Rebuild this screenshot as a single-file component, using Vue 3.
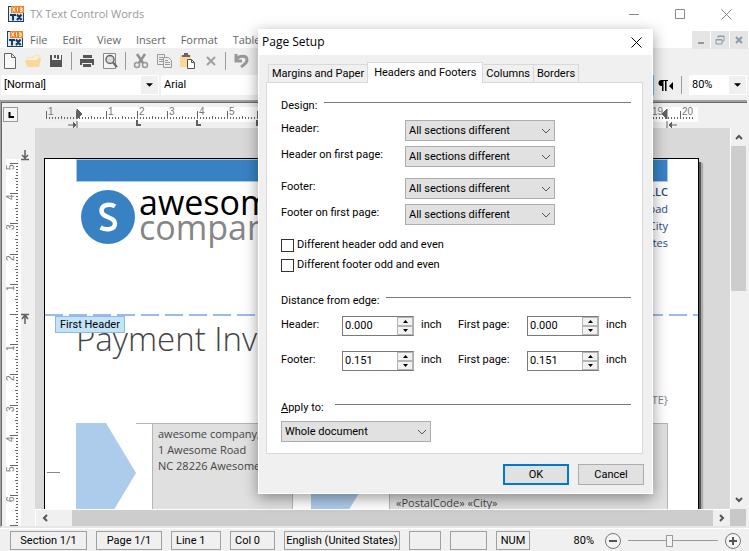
<script setup>
import { reactive, ref } from 'vue'

const UNIT = 30.2
const menus = ['File', 'Edit', 'View', 'Insert', 'Format', 'Table']

function buildTicks(from, to) {
  const list = []
  for (let i = from * 10; i <= to * 10; i++) {
    const whole = i % 10 === 0
    list.push({
      pos: Math.round((i - from * 10) * UNIT / 10),
      size: whole ? 8 : i % 5 === 0 ? 3 : 2,
      label: whole && i !== 0 ? String(Math.abs(i / 10)) : ''
    })
  }
  return list
}
const hTicks = buildTicks(-1, 20.4)
const vTicks = buildTicks(-5, 7)
const tabStops = [2, 4, 6].map(n => Math.round((n + 1) * UNIT))

const tabs = ['Margins and Paper', 'Headers and Footers', 'Columns', 'Borders']
const activeTab = ref('Headers and Footers')

const sectionChoices = ['All sections different', 'Same as previous']
const design = reactive([
  { id: 'header', label: 'Header:', value: sectionChoices[0] },
  { id: 'header-first', label: 'Header on first page:', value: sectionChoices[0] },
  { id: 'footer', label: 'Footer:', value: sectionChoices[0], spaced: true },
  { id: 'footer-first', label: 'Footer on first page:', value: sectionChoices[0] }
])
const oddEven = reactive([
  { id: 'odd-header', label: 'Different header odd and even', on: false },
  { id: 'odd-footer', label: 'Different footer odd and even', on: false }
])
const distances = reactive([
  { id: 'dist-header', label: 'Header:', value: '0.000' },
  { id: 'dist-header-first', label: 'First page:', value: '0.000' },
  { id: 'dist-footer', label: 'Footer:', value: '0.151' },
  { id: 'dist-footer-first', label: 'First page:', value: '0.151' }
])
function step(field, by) {
  field.value = Math.max(0, Number(field.value) + by).toFixed(3)
}
const applyTo = ref('Whole document')
const style = ref('[Normal]')
const font = ref('Arial')
const zoomText = ref('80%')
const zoomValue = ref(46)
</script>

<template>
  <div class="app">
    <header class="titlebar">
      <svg class="logo" viewBox="0 0 16 16" aria-hidden="true">
        <rect x="0.5" y="0.5" width="15" height="15" fill="#dfe9f2" stroke="#17406b" />
        <rect x="3" y="0" width="13" height="7" fill="#f58220" />
        <path d="M4.5 1.5l2.5 4M7 1.5l-2.5 4M9.5 1.5v4M12 2h2v3.500h-2M12 3.700h2" stroke="#fff" fill="none" />
        <path d="M2 9h6M5 9v5.500M9 8.500l4.500 5.500M13.500 8.500L9 14" stroke="#123a63" stroke-width="2" fill="none" />
      </svg>
      <span class="app-name">TX Text Control Words</span>
      <div class="win-buttons">
        <button type="button" aria-label="Minimize"><svg viewBox="0 0 11 11"><path d="M0 5.500h10" /></svg></button>
        <button type="button" aria-label="Maximize"><svg viewBox="0 0 11 11"><path d="M.5.5h9v9h-9z" /></svg></button>
        <button type="button" aria-label="Close"><svg viewBox="0 0 11 11"><path d="M.5.5l10 10M10.500.5l-10 10" /></svg></button>
      </div>
    </header>

    <nav class="menubar">
      <svg class="logo" viewBox="0 0 16 16" aria-hidden="true">
        <rect x="0.5" y="0.5" width="15" height="15" fill="#dfe9f2" stroke="#17406b" />
        <rect x="3" y="0" width="13" height="7" fill="#f58220" />
        <path d="M4.5 1.5l2.5 4M7 1.5l-2.5 4M9.5 1.5v4M12 2h2v3.500h-2M12 3.700h2" stroke="#fff" fill="none" />
        <path d="M2 9h6M5 9v5.500M9 8.500l4.500 5.500M13.500 8.500L9 14" stroke="#123a63" stroke-width="2" fill="none" />
      </svg>
      <div class="menus"><button v-for="m in menus" :key="m" type="button" class="menu">{{ m }}</button></div>
      <div class="mdi-buttons">
        <button type="button" aria-label="Minimize document"><svg viewBox="0 0 10 10"><path d="M2 8h6" stroke-width="2" /></svg></button>
        <button type="button" aria-label="Restore document"><svg viewBox="0 0 10 10"><path d="M3 3V1h6v5H7M3 1.500h6M1 4.500h6V9H1zM1 5h6" stroke-width="1" /></svg></button>
        <button type="button" aria-label="Close document"><svg viewBox="0 0 10 10"><path d="M2 2l6 6M8 2l-6 6" stroke-width="2" /></svg></button>
      </div>
    </nav>

    <div class="toolbar">
      <button type="button" aria-label="New"><svg viewBox="0 0 16 16"><path d="M2.500.5h7l4 4v11h-11zM9.500.5v4h4" fill="#f8f8f8" stroke="#666" /></svg></button>
      <button type="button" aria-label="Open"><svg viewBox="0 0 16 16"><path d="M2.500 8V4.500h5l2-2h5v5" fill="none" stroke="#fbe3b8" stroke-width="1.500" /><path d="M0 7h12l1-2h3l-2 9H2z" fill="#fbd897" /></svg></button>
      <button type="button" aria-label="Save"><svg viewBox="0 0 16 16"><path d="M2 2h2v5h9V2h1v12H2z" fill="#555" /><path d="M6 2h2v3H6zM9 2h2v4H9z" fill="#555" /></svg></button>
      <span class="sep"></span>
      <button type="button" aria-label="Print"><svg viewBox="0 0 16 16"><path d="M4 2h9v3H4z" fill="#555" /><path d="M1 6h14v6h-2v-2H3v2H1z" fill="#555" /><path d="M4 11h8v3H4z" fill="#555" /></svg></button>
      <button type="button" aria-label="Print preview"><svg viewBox="0 0 16 16"><path d="M1.500.5h12v15h-12z" fill="#f4f4f4" stroke="#888" /><circle cx="8" cy="6.500" r="4" fill="#ddd" stroke="#666" stroke-width="1.500" /><path d="M11 9.500l4 4.500" stroke="#666" stroke-width="2" /></svg></button>
      <span class="sep"></span>
      <button type="button" aria-label="Cut"><svg viewBox="0 0 16 16"><path d="M4 1l6 9M12 1L6 10" stroke="#909090" stroke-width="2.500" /><circle cx="4" cy="12" r="2.500" fill="none" stroke="#999" stroke-width="1.500" /><circle cx="12" cy="12" r="2.500" fill="none" stroke="#999" stroke-width="1.500" /></svg></button>
      <button type="button" aria-label="Copy"><svg viewBox="0 0 16 16"><path d="M1.500 1.500h7v10h-7zM3 4.500h4M3 6.500h4M3 8.500h4" fill="#eee" stroke="#999" /><path d="M7.500 4.500h5l3 3v7h-8zM9 7.500h3M9 9.500h5M9 11.500h5" fill="#eee" stroke="#999" /></svg></button>
      <button type="button" aria-label="Paste"><svg viewBox="0 0 16 16"><path d="M1 2h11v12H1z" fill="#fbd897" /><path d="M3 4V2h2V0h4v2h2v2z" fill="#666" /><path d="M8.500 6.500h4l3 3v6h-7z" fill="#fff" stroke="#555" /><path d="M12.500 6.500v3h3" fill="none" stroke="#555" /></svg></button>
      <button type="button" aria-label="Delete"><svg viewBox="0 0 16 16"><path d="M5 4l8 8M13 4l-8 8" stroke="#a0a0a0" stroke-width="2" /></svg></button>
      <span class="sep"></span>
      <button type="button" aria-label="Undo"><svg viewBox="0 0 16 16"><path d="M3 1v7h6" fill="none" stroke="#999" stroke-width="3" /><path d="M3 7c3-5 11-5 11 0 0 3-3 5-6 7" fill="none" stroke="#999" stroke-width="3" /></svg></button>
    </div>

    <div class="formatbar">
      <div class="combo style-combo"><input v-model="style" aria-label="Style"><button type="button" aria-label="Show styles"><svg viewBox="0 0 8 4"><path d="M0 0h8L4 4z" /></svg></button></div>
      <div class="combo font-combo"><input v-model="font" aria-label="Font"><button type="button" aria-label="Show fonts"><svg viewBox="0 0 8 4"><path d="M0 0h8L4 4z" /></svg></button></div>
      <button type="button" class="toggle" aria-label="Left to right" aria-pressed="true"></button>
      <button type="button" class="rtl" aria-label="Right to left"><svg viewBox="0 0 15 13"><path d="M9 1H3.500a3 3 0 0 0 0 6H4v5h1.500V2H7v10h1.500V2H10V1zM15 3v8l-4-4z" /></svg></button>
      <span class="sep"></span>
      <div class="combo zoom-combo"><input v-model="zoomText" aria-label="Zoom"><button type="button" aria-label="Show zoom levels"><svg viewBox="0 0 8 4"><path d="M0 0h8L4 4z" /></svg></button></div>
    </div>

    <main class="editor">
      <div class="corner"><button type="button" aria-label="Tab type"><svg viewBox="0 0 6 6"><path d="M1.500 0v5H6" fill="none" stroke="#000" stroke-width="2" /></svg></button></div>
      <div class="ruler-top">
        <svg class="h-ruler" width="652" height="25">
          <rect x="0" y="4" width="652" height="15" fill="#fff" />
          <rect x="0" y="4" width="31" height="15" fill="#eee" />
          <g v-for="t in hTicks" :key="t.pos">
            <rect :x="t.pos" :y="16 - t.size" width="1" :height="t.size" fill="#666" />
            <text v-if="t.label" :x="t.pos + 2" y="12">{{ t.label }}</text>
          </g>
          <path d="M31 6l5 5-5 5zM22 22h8M27 19l3 3-3 3M31 18v7" fill="#606060" stroke="#606060" />
          <path v-for="s in tabStops" :key="s" :d="`M${s} 17v5h4`" fill="none" stroke="#606060" stroke-width="2" />
          <path d="M621 6l-5 5 5 5zM623 22h8M626 19l-3 3 3 3M621 18v7" fill="#606060" stroke="#606060" />
        </svg>
      </div>
      <div class="ruler-left">
        <svg class="v-ruler" width="23" height="400">
          <rect x="0" y="0" width="15" height="400" fill="#fff" />
          <g v-for="t in vTicks" :key="t.pos">
            <rect :x="12 - t.size" :y="t.pos + 4" :width="t.size" height="1" fill="#666" />
            <text v-if="t.label" :transform="`translate(8 ${t.pos + 11}) rotate(-90)`">{{ t.label }}</text>
          </g>
        </svg>
        <svg class="v-marks" width="8" height="180"><path d="M4 0v9M1 5l3 3 3-3M0 9.500h8M0 164.500h8M4 165v9M1 169l3-4 3 4" fill="none" stroke="#606060" stroke-width="1.500" /></svg>
      </div>

      <div class="workspace">
        <div class="viewport">
          <article class="page">
            <div class="band"></div>
            <div class="letterhead">
              <svg class="brand-mark" viewBox="0 0 54 54" aria-hidden="true"><circle cx="27" cy="27" r="27" fill="#3882c4" /><path d="M34 16.500C30 13.500 20.500 14 20.500 21c0 7 13.500 5.500 13.500 12.500 0 6.500-9 7-14.500 4" fill="none" stroke="#fff" stroke-width="4.500" /></svg>
              <p class="brand"><b>awesome</b><span>company</span></p>
              <address><strong>awesome company, LLC</strong><br>1 Awesome Road<br>Awesome City<br>United States</address>
            </div>
            <div class="divider"><span class="tag">First Header</span></div>
            <h1>Payment Invoice</h1>
            <p class="date">{DATE}</p>
            <section class="parties">
              <span class="fold"></span>
              <svg viewBox="0 0 60 100"><path d="M0 0h30l30 50-30 50H0z" fill="#adcbea" /></svg>
              <div class="party"><p>awesome company, LLC<br>1 Awesome Road<br>NC 28226 Awesome City</p></div>
              <svg class="second" viewBox="0 0 60 100"><path d="M0 0h30l30 50-30 50H0z" fill="#adcbea" /></svg>
              <div class="party client"><p>«PostalCode» «City»</p></div>
            </section>
          </article>
        </div>
        <div class="vscroll">
          <button type="button" aria-label="Scroll up"><svg viewBox="0 0 8 6"><path d="M1 5l3-3 3 3" /></svg></button>
          <div class="track"><div class="thumb"></div></div>
          <button type="button" aria-label="Scroll down"><svg viewBox="0 0 8 6"><path d="M1 1l3 3 3-3" /></svg></button>
        </div>
        <div class="hscroll">
          <button type="button" aria-label="Scroll left"><svg viewBox="0 0 6 8"><path d="M5 1L2 4l3 3" /></svg></button>
          <div class="thumb"></div>
          <button type="button" aria-label="Scroll right"><svg viewBox="0 0 6 8"><path d="M1 1l3 3-3 3" /></svg></button>
        </div>
        <div class="grip"></div>
      </div>
    </main>

    <footer class="statusbar">
      <span class="cell section">Section 1/1</span>
      <span class="cell page-no">Page 1/1</span>
      <span class="cell line">Line 1</span>
      <span class="cell col">Col 0</span>
      <span class="cell lang">English (United States)</span>
      <span class="cell empty"></span>
      <span class="cell wide"></span>
      <span class="cell num">NUM</span>
      <div class="zoomer">
        <label for="zoom-range">80%</label>
        <button type="button" aria-label="Zoom out"><svg viewBox="0 0 16 16"><circle cx="8" cy="8" r="7.500" /><path d="M4 8h8" /></svg></button>
        <input id="zoom-range" v-model="zoomValue" type="range" min="0" max="100">
        <button type="button" aria-label="Zoom in"><svg viewBox="0 0 16 16"><circle cx="8" cy="8" r="7.500" /><path d="M4 8h8M8 4v8" /></svg></button>
      </div>
    </footer>

    <section class="dialog" role="dialog" aria-labelledby="dialog-title">
      <header>
        <h2 id="dialog-title">Page Setup</h2>
        <button type="button" aria-label="Close dialog"><svg viewBox="0 0 11 11"><path d="M.5.5l10 10M10.500.5l-10 10" /></svg></button>
      </header>
      <div class="tabs" role="tablist">
        <button v-for="t in tabs" :key="t" type="button" role="tab" :aria-selected="t === activeTab" :class="{ active: t === activeTab }" @click="activeTab = t">{{ t }}</button>
      </div>
      <form class="panel" @submit.prevent>
        <h3>Design:</h3>
        <div v-for="d in design" :key="d.id" class="row" :class="{ spaced: d.spaced }">
          <label :for="d.id">{{ d.label }}</label>
          <span class="select">
            <select :id="d.id" v-model="d.value"><option v-for="c in sectionChoices" :key="c">{{ c }}</option></select>
            <svg viewBox="0 0 10 6"><path d="M1 1l4 4 4-4" /></svg>
          </span>
        </div>
        <div class="checks">
          <label v-for="o in oddEven" :key="o.id" :for="o.id"><input :id="o.id" v-model="o.on" type="checkbox">{{ o.label }}</label>
        </div>
        <h3>Distance from edge:</h3>
        <div class="distances">
          <div v-for="d in distances" :key="d.id" class="distance">
            <label :for="d.id">{{ d.label }}</label>
            <span class="spin">
              <input :id="d.id" v-model="d.value" type="text">
              <span class="arrows">
                <button type="button" aria-label="Increase" @click="step(d, 0.1)"><svg viewBox="0 0 5 3"><path d="M0 3h5L2.500 0z" /></svg></button>
                <button type="button" aria-label="Decrease" @click="step(d, -0.1)"><svg viewBox="0 0 5 3"><path d="M0 0h5L2.500 3z" /></svg></button>
              </span>
            </span>
            <span class="unit">inch</span>
          </div>
        </div>
        <h3 class="apply"><label for="apply"><u>A</u>pply to:</label></h3>
        <span class="select">
          <select id="apply" v-model="applyTo"><option>Whole document</option><option>Selected sections</option></select>
          <svg viewBox="0 0 10 6"><path d="M1 1l4 4 4-4" /></svg>
        </span>
      </form>
      <footer>
        <button type="button" class="default">OK</button>
        <button type="button">Cancel</button>
      </footer>
    </section>
  </div>
</template>

<style>
body { margin: 0; background: #f0f0f0; }
</style>

<style scoped>
.app { position: relative; display: flex; flex-direction: column; height: 100vh; overflow: hidden; background: #f0f0f0; color: #000; font: 11px/16px Roboto, "Liberation Sans", sans-serif; }
.app *, .app *::before, .app *::after { box-sizing: border-box; }
button, input, select { font: inherit; color: inherit; margin: 0; padding: 0; border: 0; border-radius: 0; background: none; outline: 0; }
button { display: flex; align-items: center; justify-content: center; }
svg { display: block; flex: none; }
h1, h2, h3, p { margin: 0; font-weight: normal; }

.titlebar, .menubar { display: flex; align-items: center; background: #fff; font: 11px/16px "Open Sans", "Noto Sans", sans-serif; flex: none; }
.titlebar { height: 28px; padding-left: 8px; color: #999; }
.menubar { height: 20px; padding-left: 7px; color: #666; }
.logo { width: 16px; height: 16px; }
.app-name { padding-left: 6px; }
.win-buttons { display: flex; margin-left: auto; }
.win-buttons button { width: 46px; height: 28px; }
.win-buttons svg { width: 11px; height: 11px; fill: none; stroke: #888; }
.menus { display: flex; gap: 1px; margin-top: 4px; }
.menu { height: 16px; padding: 0 7px; }
.menubar .logo { margin-top: 2px; }
.mdi-buttons { display: flex; gap: 1px; margin: 3px 1px 0 auto; align-self: flex-start; }
.mdi-buttons button { width: 18px; height: 18px; background: #e5e5e5; }
.mdi-buttons svg { width: 10px; height: 10px; fill: none; stroke: #8c9cab; }

.toolbar { display: flex; align-items: center; gap: 7px; height: 26px; padding-left: 2px; flex: none; }
.toolbar svg { width: 16px; height: 16px; }
.sep { width: 1px; height: 18px; background: #999; }

.formatbar { display: flex; align-items: center; height: 26px; padding: 0 2px 4px 1px; flex: none; }
.combo { display: flex; height: 20px; background: #fff; }
.combo input { flex: 1; min-width: 0; padding-left: 3px; }
.combo button { width: 17px; margin: 1px; background: #f0f0f0; }
.combo svg { width: 7px; height: 4px; }
.style-combo { width: 158px; margin-right: 2px; }
.font-combo { width: 300px; }
.toggle { width: 22px; height: 20px; margin-left: auto; border: 1px solid #7eb4ea; background: #cce4f7; }
.rtl { width: 15px; height: 20px; margin: 0 8px 0 4px; }
.rtl svg { width: 15px; height: 13px; }
.zoom-combo { width: 58px; margin-left: 7px; }

.editor { flex: 1; min-height: 0; display: grid; grid-template: 25px 1fr / 33px 1fr; margin-right: 2px; border-top: 2px solid #a0a0a0; border-left: 1px solid #a0a0a0; border-bottom: 2px solid #e6e6e6; box-shadow: inset 1px 1px 0 #696969; padding: 1px 1px 0 1px; }
.corner { padding: 4px 0 0 1px; }
.corner button { width: 15px; height: 15px; border: 1px solid #999; background: #f4f4f4; }
.corner svg { width: 6px; height: 6px; }
.ruler-top { padding-left: 11px; overflow: hidden; }
.h-ruler text, .v-ruler text { font: 10px "Liberation Sans", sans-serif; fill: #777; }
.ruler-left { display: flex; overflow: hidden; padding-left: 4px; }
.v-ruler { width: 15px; margin-top: 31px; }
.v-marks { margin-top: 22px; }

.workspace { min-width: 0; min-height: 0; display: grid; grid-template: 1fr 17px / 1fr 16px; background: #f0f0f0; }
.viewport { min-width: 0; min-height: 0; overflow: hidden; padding: 30px 31px 0 9px; background: #d9d9d9; }
.page { position: relative; min-height: 800px; padding: 0 30px 0 31px; border: 1px solid #000; background: #fff; box-shadow: 2px 4px 0 #555, 4px 5px 1px #aaa; }
.band { height: 23px; background: #3882c4; border: solid #a9c8e6; border-width: 1px; }
.letterhead { display: flex; height: 132px; }
.brand-mark { width: 54px; height: 54px; margin: 8px 4px 0 5px; }
.brand { padding-top: 8px; font: 34px/25px "Open Sans", "Noto Sans", sans-serif; }
.brand b, .brand span { display: block; font-weight: 400; }
.brand span { color: #868686; }
address { margin-left: auto; padding-top: 1px; text-align: right; font: 11px/17px "Open Sans", "Noto Sans", sans-serif; color: #1f4e79; }
address strong { font-weight: 600; }
.divider { position: relative; height: 2px; margin: 0 -30px 0 -31px; background: repeating-linear-gradient(90deg, #9bbbe8 0 18px, #fff 18px 24px); }
.tag { position: absolute; top: 2px; left: 10px; height: 17px; padding: 0 4px; border: 1px solid #90b8e6; background: #c2e4f6; line-height: 15px; white-space: nowrap; }
h1 { font: 300 33px/46px "Open Sans", "Noto Sans", sans-serif; color: #444; }
.date { margin: 29px 0 15px; text-align: right; font: 11px/17px "Open Sans", "Noto Sans", sans-serif; color: #7a8494; }
.parties { position: relative; display: grid; grid-template-columns: 60px 157px 78px 1fr; height: 240px; font: 300 11px/16px "Open Sans", "Noto Sans", sans-serif; color: #444; }
.parties svg { width: 60px; height: 100px; }
.parties .second { margin-left: 18px; }
.fold { position: absolute; left: -29px; top: 49px; width: 13px; height: 1px; background: #888; }
.party { border-top: 1px solid #b5b5b5; padding-left: 16px; }
.party p { height: 100%; padding: 2px 0 0 5px; border: solid #b5b5b5; border-width: 0 1px; background: #e0e0e0; white-space: nowrap; overflow: hidden; }
.client { padding-left: 18px; }
.client p { padding-top: 71px; padding-left: 6px; }

.vscroll { display: flex; flex-direction: column; border-left: 1px solid #fff; }
.vscroll button { height: 18px; }
.vscroll svg { width: 8px; height: 6px; }
.hscroll svg { width: 6px; height: 8px; }
.vscroll path, .hscroll path { fill: none; stroke: #555; stroke-width: 2; }
.track { flex: 1; }
.thumb { background: #cdcdcd; }
.vscroll .thumb { height: 42%; }
.hscroll { display: flex; border-top: 1px solid #fff; border-left: 1px solid #fff; }
.hscroll button { width: 17px; }
.hscroll .thumb { flex: 1; margin-left: 19px; }
.grip { background: #c8c8c8; }

.statusbar { display: flex; align-items: center; gap: 9px; height: 23px; padding: 1px 8px 0 10px; border-top: 1px solid #fff; flex: none; }
.cell { height: 19px; border: 1px solid #a0a0a0; text-align: center; line-height: 18px; white-space: nowrap; flex: none; }
.section { width: 77px; }
.page-no { width: 66px; }
.line { width: 50px; padding-left: 4px; text-align: left; }
.col { width: 45px; padding-left: 4px; text-align: left; }
.lang { width: 116px; }
.empty { width: 32px; }
.wide { width: 37px; }
.num { width: 34px; }
.zoomer { display: flex; align-items: center; margin-left: auto; }
.zoomer label { padding-right: 11px; }
.zoomer button svg { width: 16px; height: 16px; }
.zoomer circle { fill: #f4f4f4; stroke: #777; }
.zoomer path { stroke: #555; stroke-width: 2; }
.zoomer input { appearance: none; width: 90px; height: 16px; margin: 0 7px; background: linear-gradient(#999, #999) center / 100% 1px no-repeat; }
.zoomer input::-webkit-slider-thumb { appearance: none; width: 7px; height: 12px; border: 1px solid #999; background: #f4f4f4; }

.dialog { position: absolute; left: 258px; top: 29px; width: 395px; padding-bottom: 8px; background: #f0f0f0; box-shadow: 0 4px 14px rgba(0, 0, 0, .4); border: 1px solid #fff; border-top: 0; }
.dialog header { display: flex; align-items: center; justify-content: space-between; height: 26px; padding: 0 10px 0 3px; background: #fff; }
.dialog header svg { width: 11px; height: 11px; fill: none; stroke: #000; }
h2 { font: 12px/16px "Open Sans", "Noto Sans", sans-serif; }
.tabs { position: relative; display: flex; align-items: flex-end; height: 27px; padding-left: 9px; }
.tabs button { height: 18px; padding: 0 3px; border: 1px solid #d9d9d9; border-bottom: 0; margin-right: -1px; white-space: nowrap; }
.tabs .active { position: relative; height: 21px; padding: 0 6px; margin-bottom: -1px; background: #fff; }
.panel { margin: 0 9px 0 7px; padding: 14px 11px 11px 14px; border: 1px solid #d9d9d9; background: #fff; }
h3 { display: flex; gap: 7px; font-size: 11px; line-height: 17px; margin-bottom: -1px; }
h3.apply { gap: 11px; }
h3::after { content: ""; flex: 1; height: 1px; margin-top: 5px; background: #7a7a7a; }
.row { display: flex; margin-top: 5px; }
h3 + .row { margin-top: 7px; }
.row.spaced { margin-top: 11px; }
.row > label { width: 124px; padding-top: 1px; }
.select { position: relative; display: block; width: 150px; height: 21px; }
.select select { appearance: none; width: 100%; height: 100%; padding-left: 3px; border: 1px solid #adadad; background: #e1e1e1; }
.select svg { position: absolute; right: 4px; top: 8px; width: 10px; height: 6px; fill: none; stroke: #555; pointer-events: none; }
.checks { display: flex; flex-direction: column; gap: 4px; margin: 12px 0 19px; }
.checks label { display: flex; align-items: center; gap: 3px; }
.checks input { appearance: none; width: 13px; height: 13px; border: 1px solid #333; background: #fff; }
.checks input:checked { background: #333; }
.distances { display: grid; grid-template-columns: 177px 1fr; row-gap: 15px; margin: 8px 0 28px; }
.distance { display: flex; }
.distance > label { width: 61px; padding-top: 1px; }
.distance:nth-child(even) > label { width: 69px; }
.spin { display: flex; width: 72px; height: 20px; border: 1px solid #7a7a7a; border-right-color: #adadad; }
.spin input { flex: 1; min-width: 0; padding-left: 2px; }
.arrows { display: flex; flex-direction: column; width: 16px; background: #e8e8e8; }
.arrows button { flex: 1; border: 1px solid #b5b5b5; background: #f2f2f2; }
.arrows svg { width: 5px; height: 3px; }
.unit { padding: 1px 0 0 7px; }
.panel > .select { margin-top: 6px; }
.dialog footer { display: flex; justify-content: flex-end; gap: 9px; padding: 10px 8px 0; }
.dialog footer button { width: 66px; height: 21px; border: 1px solid #adadad; background: #e1e1e1; }
.dialog footer .default { border: 2px solid #0078d7; }
</style>
